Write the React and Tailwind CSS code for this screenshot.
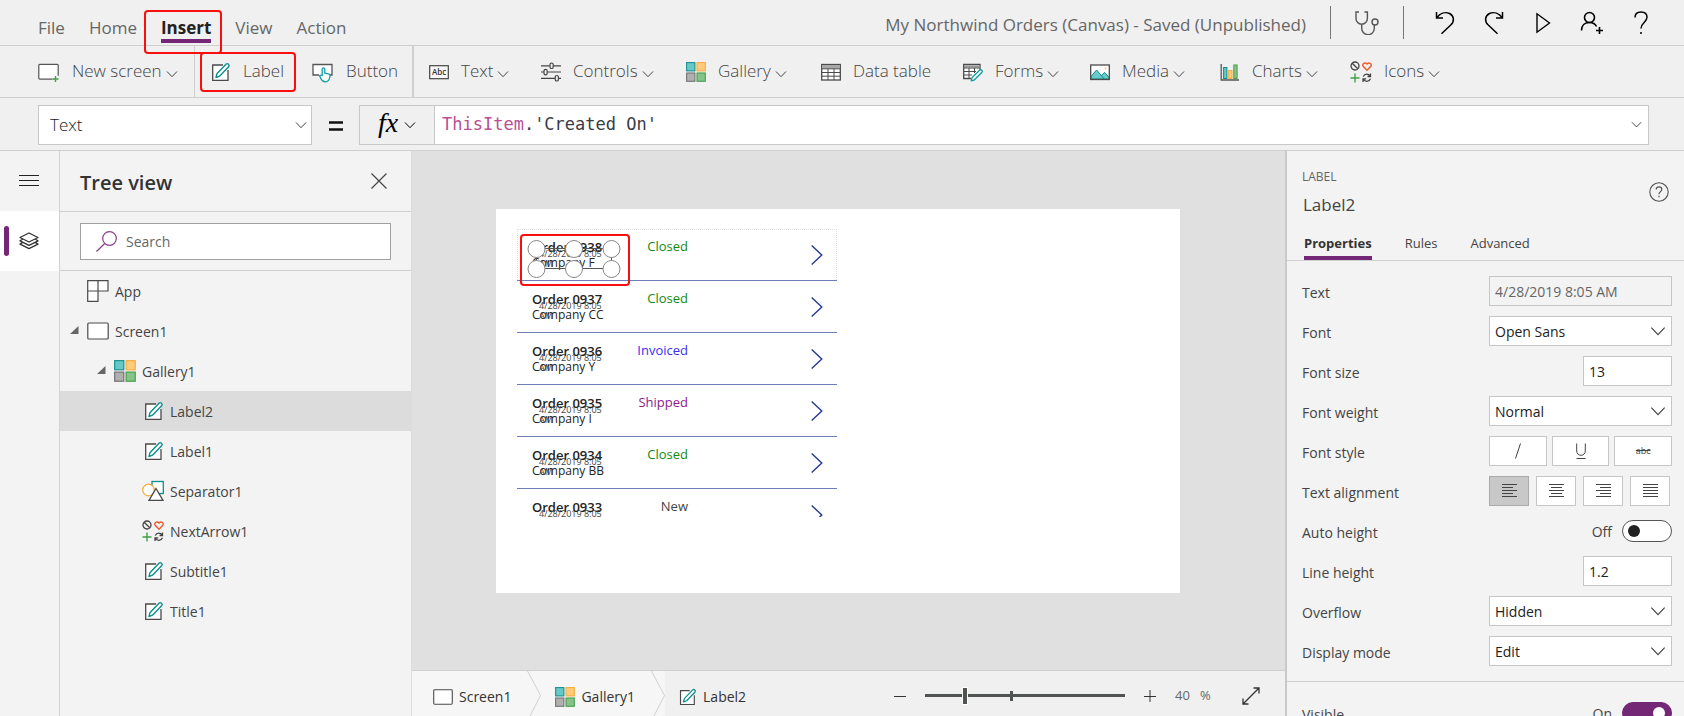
import React from "react";

const stroke = { fill: "none", stroke: "currentColor" };

function Chevron({ className = "w-3 h-3", width = 1 }) {
  return (
    <svg viewBox="0 0 12 12" className={className} {...stroke} strokeWidth={width} aria-hidden="true">
      <path d="M1 3.5 6 8.7 11 3.5" />
    </svg>
  );
}

function ScreenIcon({ className = "w-[22px] h-[22px]" }) {
  return (
    <svg viewBox="0 0 22 22" className={className} aria-hidden="true">
      <rect x="0.8" y="3" width="20.4" height="16" rx="1" fill="#fff" stroke="#4a4a4a" strokeWidth="1.2" />
    </svg>
  );
}

function NewScreenIcon() {
  return (
    <svg viewBox="0 0 22 20" className="h-5 w-[22px]" fill="none" aria-hidden="true">
      <path d="M14.5 17.2H1.8a1 1 0 0 1-1-1V3.3a1 1 0 0 1 1-1h17.4a1 1 0 0 1 1 1v10.5" fill="#fff" stroke="#555" strokeWidth="1.2" />
      <path d="M14.5 17H20.5M17.500 14v6" stroke="#43a047" strokeWidth="1.4" />
    </svg>
  );
}

function LabelIcon({ className = "w-5 h-5" }) {
  return (
    <svg viewBox="0 0 20 20" className={className} fill="none" aria-hidden="true">
      <path d="M12 3H1.7V18.3H17V8" fill="#fff" stroke="#4a4a4a" strokeWidth="1.3" />
      <path d="M5 15.5 5.9 11.8 15 2.3a1.7 1.7 0 0 1 2.6 2.4L8.5 14.2Z" fill="#fff" stroke="#0b8f8c" strokeWidth="1.4" strokeLinejoin="round" />
    </svg>
  );
}

function ButtonIcon() {
  return (
    <svg viewBox="0 0 22 22" className="h-[22px] w-[22px]" fill="none" aria-hidden="true">
      <path d="M7 14H1V3.5h19V14h-2" fill="#fff" stroke="#555" strokeWidth="1.3" />
      <path d="M10.2 14.5V8.2a1.3 1.3 0 0 1 2.6 0v4l3.6.7c1.5.3 1.8 1.2 1.5 2.6-.4 2.6-1.2 5.3-4.5 5.3-2.7 0-3.7-1.3-4.6-3.3l-1.2-2.7c.9-1 2-.7 2.6-.3Z" fill="#fff" stroke="#0b9fa5" strokeWidth="1.3" strokeLinejoin="round" />
    </svg>
  );
}

function TextIcon() {
  return (
    <svg viewBox="0 0 20 20" className="h-5 w-5" aria-hidden="true">
      <rect x="0.7" y="3.7" width="18.6" height="13" fill="#f8f8f8" stroke="#444" strokeWidth="1.2" />
      <text x="10" y="13" textAnchor="middle" fontFamily="Open Sans, sans-serif" fontSize="8" fontWeight="600" fill="#333">Abc</text>
    </svg>
  );
}

function ControlsIcon() {
  return (
    <svg viewBox="0 0 20 20" className="h-5 w-5" fill="none" stroke="#444" strokeWidth="1.2" aria-hidden="true">
      <path d="M0 3.8h8.7M12.5 3.8H20M0 10h3M6.5 10H20M0 16.3h14M17.5 16.3H20" />
      <rect x="9" y="1" width="3.2" height="5.5" rx="1.6" />
      <rect x="3" y="7.3" width="3.2" height="5.5" rx="1.6" />
      <rect x="14.2" y="13.5" width="3.2" height="5.5" rx="1.6" />
    </svg>
  );
}

function GalleryIcon({ className = "w-5 h-5" }) {
  return (
    <svg viewBox="0 0 20 20" className={className} strokeWidth="1.1" aria-hidden="true">
      <rect x="0.6" y="0.6" width="8.3" height="8.3" fill="#68c8c8" stroke="#1b9190" />
      <rect x="11" y="0.6" width="8.3" height="8.3" fill="#fccb7c" stroke="#f4ad3f" />
      <rect x="0.6" y="11" width="8.3" height="8.3" fill="#b0b0b0" stroke="#747474" />
      <rect x="11" y="11" width="8.3" height="8.3" fill="#86c28a" stroke="#45a24a" />
    </svg>
  );
}

function TableIcon() {
  return (
    <svg viewBox="0 0 20 20" className="h-5 w-5" fill="none" stroke="#4a4a4a" aria-hidden="true">
      <rect x="0.7" y="2.5" width="18.6" height="15.5" fill="#fff" strokeWidth="1.3" />
      <rect x="1" y="3" width="18" height="3.5" fill="#a8a8a8" stroke="none" />
      <path d="M0.7 6.8h18.6M0.7 10.5h18.6M0.7 14.2h18.6M7 6.8V18M13 6.8V18" />
    </svg>
  );
}

function FormsIcon() {
  return (
    <svg viewBox="0 0 20 20" className="h-5 w-5" fill="none" aria-hidden="true">
      <path d="M8 16.5H.7V2.5H17V8" fill="#fff" stroke="#4a4a4a" strokeWidth="1.3" />
      <path d="M1 4.5h16" stroke="#999" strokeWidth="2" />
      <path d="M.7 6h16M.7 9.5H13M.7 13H9M6 6v10.5M11.5 6v5" stroke="#4a4a4a" />
      <path d="M8.2 18.8 9 15.8 16.5 8.3a1.5 1.5 0 0 1 2.2 2.2L11.2 18Z" fill="#fff" stroke="#0b9fa5" strokeWidth="1.3" strokeLinejoin="round" />
    </svg>
  );
}

function MediaIcon() {
  return (
    <svg viewBox="0 0 20 20" className="h-5 w-5" aria-hidden="true">
      <rect x="0.7" y="3" width="18.6" height="14.5" fill="#fff" />
      <path d="M1 14.5 6.5 8l4 4.5 1 1 3-3.2 4.5 5V17H1Z" fill="#68cbcb" stroke="#0b8f8c" />
      <path d="m10.5 12.5 3.5 4.5" stroke="#0b8f8c" />
      <circle cx="15.5" cy="6.5" r="1" fill="#fbc36b" />
      <rect x="0.7" y="3" width="18.6" height="14.5" fill="none" stroke="#4a4a4a" strokeWidth="1.3" />
    </svg>
  );
}

function ChartsIcon() {
  return (
    <svg viewBox="0 0 20 20" className="h-5 w-5" aria-hidden="true">
      <rect x="3.6" y="5.5" width="3.3" height="11" fill="#68c8c8" stroke="#0b8f8c" />
      <rect x="8.7" y="8.5" width="3.3" height="8" fill="#fccb7c" stroke="#f4ad3f" />
      <rect x="13.8" y="3" width="3.3" height="13.5" fill="#86c28a" stroke="#45a24a" />
      <path d="M1.2 2v16H19" fill="none" stroke="#555" strokeWidth="1.3" />
    </svg>
  );
}

function IconsIcon({ className = "w-[22px] h-[22px]" }) {
  return (
    <svg viewBox="0 0 22 22" className={className} fill="none" aria-hidden="true">
      <g stroke="#444" strokeWidth="1.3">
        <circle cx="5" cy="5" r="4" />
        <path d="m2.2 2.2 5.6 5.6" />
        <path d="M13.3 15.5c.8-1.7 2-2.3 3.4-2.3 1.5 0 2.7.7 3.4 2M20.5 12.5v3h-3M20.5 17.8c-.7 1.7-2 2.5-3.5 2.5s-2.8-.7-3.5-2M13 21v-3.2h3.2" />
      </g>
      <path d="M17 9.2 13.2 5.3C11.8 3.5 14.5.3 17 3c2.5-2.700 5.2.5 3.8 2.3Z" stroke="#f0592b" strokeWidth="1.4" />
      <path d="M5 12.5v9M.5 17h9" stroke="#43a047" strokeWidth="1.4" />
    </svg>
  );
}

function AppIcon() {
  return (
    <svg viewBox="0 0 22 22" className="h-[22px] w-[22px]" fill="#fff" stroke="#4a4a4a" strokeWidth="1.2" aria-hidden="true">
      <path d="M.7.7H21V11H11v10.3H.7ZM11 .7V11M.7 11H11" />
    </svg>
  );
}

function ShapesIcon() {
  return (
    <svg viewBox="0 0 22 22" className="h-[22px] w-[22px]" fill="#fff" aria-hidden="true">
      <rect x="10" y="1.5" width="11.3" height="12" stroke="#0b8f8c" strokeWidth="1.3" />
      <circle cx="6.5" cy="10" r="5.8" stroke="#f4ad3f" strokeWidth="1.3" />
      <path d="M14 8.5 21 20.3H7Z" stroke="#4a4a4a" strokeWidth="1.3" />
    </svg>
  );
}

const toolItems = [
  { label: "Text", icon: TextIcon, menu: true, size: "w-[112px]" },
  { label: "Controls", icon: ControlsIcon, menu: true, size: "w-[145px]" },
  { label: "Gallery", icon: GalleryIcon, menu: true, size: "w-[135px]" },
  { label: "Data table", icon: TableIcon, size: "w-[142px]" },
  { label: "Forms", icon: FormsIcon, menu: true, size: "w-[127px]" },
  { label: "Media", icon: MediaIcon, menu: true, size: "w-[130px]" },
  { label: "Charts", icon: ChartsIcon, menu: true, size: "w-[130px]" },
  { label: "Icons", icon: IconsIcon, menu: true, size: "w-[112px]" },
];

function ToolButton({ icon: Icon, label, menu, size = "" }) {
  return (
    <button type="button" className={"flex shrink-0 items-center gap-3 whitespace-nowrap " + size}>
      <Icon />
      <span className="flex items-center gap-1 pb-[2px]">
        {label}
        {menu && <Chevron className="mt-[6px] h-3 w-3" />}
      </span>
    </button>
  );
}

function TopBar() {
  const icon = "flex h-full w-[49px] items-center justify-center text-black";
  return (
    <header className="flex h-[46px] shrink-0 items-stretch border-b border-[#cfcfcf] pr-[19px] text-[17px] text-[#666]">
      <nav className="flex items-start gap-6 pl-[38px] pt-[14px] leading-7" aria-label="Main menu">
        <button type="button">File</button>
        <button type="button">Home</button>
        <button type="button" className="relative font-bold text-[#222]">
          Insert
          <span className="absolute inset-x-0 top-[25px] h-1 bg-[#742774]" />
          <span className="pointer-events-none absolute -left-[17px] -top-[4px] h-11 w-[78px] rounded border-2 border-[#fa0f0f]" />
        </button>
        <button type="button">View</button>
        <button type="button">Action</button>
      </nav>
      <h1 className="ml-auto mr-6 self-center pt-[5px] text-[17px]">My Northwind Orders (Canvas) - Saved (Unpublished)</h1>
      <span className="my-[6px] w-px bg-[#777]" />
      <button type="button" aria-label="App checker" className="flex w-[72px] items-center justify-center text-[#555]">
        <svg viewBox="0 0 24 24" className="h-6 w-6" {...stroke} strokeWidth="1.4">
          <path d="M4 1H1v6.5a5.7 5.7 0 0 0 11.4 0V1H9.4M6.7 13.2v4a6.3 6.3 0 0 0 12.6.3V14" />
          <circle cx="20" cy="11" r="3" />
        </svg>
      </button>
      <span className="my-[6px] mr-4 w-px bg-[#777]" />
      <button type="button" aria-label="Undo" className={icon}>
        <svg viewBox="0 0 24 24" className="h-6 w-6" {...stroke} strokeWidth="1.5">
          <path d="M3.5 1v6h6.500M3.8 6.700C7 2.5 12 .5 16.5 2.5c4.8 2.3 5 8 1.5 11.2L8.5 22.8" />
        </svg>
      </button>
      <button type="button" aria-label="Redo" className={icon}>
        <svg viewBox="0 0 24 24" className="h-6 w-6" {...stroke} strokeWidth="1.5">
          <path d="M20.5 1v6H14M20.2 6.7C17 2.5 12 .5 7.5 2.5c-4.8 2.3-5 8-1.5 11.2l9.5 9.1" />
        </svg>
      </button>
      <button type="button" aria-label="Preview the app" className={icon}>
        <svg viewBox="0 0 24 24" className="h-6 w-6" {...stroke} strokeWidth="1.4">
          <path d="M6 2.8v18.4L18.5 12Z" />
        </svg>
      </button>
      <button type="button" aria-label="Share" className={icon}>
        <svg viewBox="0 0 24 24" className="h-6 w-6" {...stroke} strokeWidth="1.6">
          <circle cx="9.5" cy="6.5" r="5" />
          <path d="M1.5 19.5c0-5 3.3-8 8-8 3.3 0 5.8 1.5 7 4M16 19.5h7M19.5 16v7" />
        </svg>
      </button>
      <button type="button" aria-label="Help" className={icon}>
        <svg viewBox="0 0 24 24" className="h-6 w-6" {...stroke} strokeWidth="1.5">
          <path d="M6 6.5C6 3 8.5 1 12 1s6 2 6 5.300c0 5.2-6 5.2-6 11.2" />
          <path d="M12 21v2" />
        </svg>
      </button>
    </header>
  );
}

function InsertBar() {
  return (
    <div role="toolbar" aria-label="Insert" className="flex h-[52px] shrink-0 items-center border-b border-[#cfcfcf] pl-[38px] text-[17px] font-light text-[#444]">
      <div className="w-[156px]">
        <ToolButton icon={NewScreenIcon} label="New screen" menu />
      </div>
      <span className="mr-4 h-full w-px bg-[#cfcfcf]" />
      <div className="relative w-[101px]">
        <ToolButton icon={LabelIcon} label="Label" />
        <span className="pointer-events-none absolute -left-[11px] -top-[6px] h-10 w-24 rounded border-2 border-[#fa0f0f]" />
      </div>
      <div className="w-[100px]">
        <ToolButton icon={ButtonIcon} label="Button" />
      </div>
      <span className="mr-[15px] h-full w-[2px] bg-[#cfcfcf]" />
      {toolItems.map((item) => (
        <ToolButton key={item.label} {...item} />
      ))}
    </div>
  );
}

function FormulaBar() {
  return (
    <div className="flex h-[53px] shrink-0 items-start border-b border-[#cfcfcf] pl-[38px] pr-[35px] pt-[7px]">
      <div className="relative w-[274px]">
        <select aria-label="Property" className="h-10 w-full appearance-none border border-[#c8c8c8] bg-white pl-[11px] text-[17px] font-light text-[#222]">
          <option>Text</option>
        </select>
        <Chevron className="pointer-events-none absolute right-[5px] top-[14px] h-3 w-3" />
      </div>
      <svg viewBox="0 0 14 10" className="ml-[17px] mr-4 mt-4 h-[10px] w-[14px]" aria-hidden="true">
        <path d="M0 1.5h14M0 8.5h14" stroke="#111" strokeWidth="2.600" />
      </svg>
      <button type="button" aria-label="Functions" className="flex h-10 w-[75px] items-center justify-center gap-[6px] border border-r-0 border-[#c8c8c8] text-black">
        <span className="pb-1 font-['Liberation_Serif',serif] text-[28px] italic leading-8">fx</span>
        <Chevron />
      </button>
      <div className="relative flex-1 border border-[#c8c8c8] bg-white font-['DejaVu_Sans_Mono',monospace] text-[17px] text-[#3b3b46]">
        <input aria-label="Formula" defaultValue="ThisItem.'Created On'" className="h-[38px] w-full bg-transparent pl-[7px] text-transparent caret-black outline-none" />
        <pre aria-hidden="true" className="pointer-events-none absolute inset-y-0 left-[7px] font-[inherit] leading-9">
          <span className="text-[#b84f97]">ThisItem</span>.'Created On'
        </pre>
        <Chevron className="pointer-events-none absolute right-[6px] top-[13px] h-[11px] w-[11px]" />
      </div>
    </div>
  );
}

const treeItems = [
  { label: "App", icon: AppIcon, pad: "pl-[27px]" },
  { label: "Screen1", icon: ScreenIcon, pad: "pl-[10px]", open: true },
  { label: "Gallery1", icon: () => <GalleryIcon className="h-[22px] w-[22px]" />, pad: "pl-[37px]", open: true },
  { label: "Label2", icon: LabelIcon, pad: "pl-[84px]", selected: true },
  { label: "Label1", icon: LabelIcon, pad: "pl-[84px]" },
  { label: "Separator1", icon: ShapesIcon, pad: "pl-[82px]" },
  { label: "NextArrow1", icon: IconsIcon, pad: "pl-[82px]" },
  { label: "Subtitle1", icon: LabelIcon, pad: "pl-[84px]" },
  { label: "Title1", icon: LabelIcon, pad: "pl-[84px]" },
];

function LeftPanel() {
  return (
    <>
      <div className="flex w-[60px] shrink-0 flex-col border-r border-[#d2d2d2]">
        <button type="button" aria-label="Menu" className="flex h-[60px] items-center pl-[19px] text-[#222]">
          <svg viewBox="0 0 20 12" className="h-3 w-5" {...stroke}>
            <path d="M0 .5h20M0 5.5h20M0 10.5h20" />
          </svg>
        </button>
        <button type="button" aria-label="Tree view" className="flex h-[60px] items-center bg-white pl-1 text-[#333]">
          <span className="h-[30px] w-[5px] rounded-sm bg-[#742774]" />
          <svg viewBox="0 0 20 20" className="ml-[10px] h-5 w-5" {...stroke} strokeWidth="1.3" strokeLinejoin="round">
            <path d="M10 2 19 6.5 10 11 1 6.5ZM3.5 8.3 1 9.8l9 4.5 9-4.5-2.5-1.5M3.5 11.6 1 13.1l9 4.5 9-4.5-2.5-1.5" />
          </svg>
        </button>
      </div>
      <aside className="flex w-[352px] shrink-0 flex-col border-r border-[#dcdcdc] text-[14px] text-[#444]">
        <div className="flex h-[61px] items-center justify-between border-b border-[#cfcfcf] pl-5 pr-6">
          <h2 className="pt-[3px] text-[20px] font-semibold text-[#333]">Tree view</h2>
          <button type="button" aria-label="Close">
            <svg viewBox="0 0 16 16" className="h-4 w-4" {...stroke} strokeWidth="1.2">
              <path d="M.5.5l15 15M15.5.5l-15 15" />
            </svg>
          </button>
        </div>
        <div className="h-[59px] border-b border-[#cfcfcf] px-5 pt-[11px]">
          <label className="flex h-[37px] items-center gap-[9px] border border-[#a0a0a0] bg-white pl-[15px]">
            <svg viewBox="0 0 21 21" className="h-[21px] w-[21px] shrink-0 text-[#8a3d8a]" {...stroke} strokeWidth="1.2">
              <circle cx="13.5" cy="7.5" r="6.8" />
              <path d="M8.7 12.5.5 20.5" />
            </svg>
            <input type="search" aria-label="Search" placeholder="Search" className="w-full bg-transparent outline-none placeholder:text-[#666]" />
          </label>
        </div>
        <ul>
          {treeItems.map(({ label, icon: Icon, pad, open, selected }) => (
            <li key={label}>
              <button type="button" className={"flex h-10 w-full items-center " + pad + (selected ? " bg-[#dcdcdc]" : "")}>
                {open && (
                  <svg viewBox="0 0 9 8" className="mb-[3px] mr-2 h-2 w-[9px]" aria-hidden="true">
                    <path d="M8.5 0V8H0Z" fill="#666" />
                  </svg>
                )}
                <Icon />
                <span className="pl-[6px]">{label}</span>
              </button>
            </li>
          ))}
        </ul>
      </aside>
    </>
  );
}

const orders = [
  { title: "Order 0938", company: "Company F", status: "Closed", color: "text-[#128a12]" },
  { title: "Order 0937", company: "Company CC", status: "Closed", color: "text-[#128a12]" },
  { title: "Order 0936", company: "Company Y", status: "Invoiced", color: "text-[#3a2ef0]" },
  { title: "Order 0935", company: "Company I", status: "Shipped", color: "text-[#8d1a8d]" },
  { title: "Order 0934", company: "Company BB", status: "Closed", color: "text-[#128a12]" },
  { title: "Order 0933", status: "New", color: "text-[#444]" },
];

function Selection() {
  return (
    <>
      <span className="absolute inset-0 border border-b-0 border-dotted border-[#ddd]" />
      <svg viewBox="0 0 96 40" className="absolute left-[10px] top-[10px] h-10 w-24" fill="#fff" stroke="#888" aria-hidden="true">
        <rect x="9.5" y="9.5" width="75" height="20" fill="none" stroke="#555" />
        {[9.5, 47, 84.5].map((x) =>
          [10, 30].map((y) => <circle key={x + "-" + y} cx={x} cy={y} r="8.5" />)
        )}
      </svg>
      <span className="absolute left-[3px] top-[5px] z-10 h-[52px] w-[110px] rounded border-2 border-[#fa0f0f]" />
    </>
  );
}

function OrderRow({ title, company, status, color, first }) {
  return (
    <li className="relative flex h-[52px] shrink-0 justify-between border-b border-[#6d7db8]">
      <div className="pl-[15px] pt-[11px] text-[12px] leading-[15px] text-[#222]">
        <p className="text-[13px] font-semibold">{title}</p>
        {company && <p>{company}</p>}
      </div>
      <p className="absolute left-[22px] top-5 w-[66px] text-[9px] leading-[10px] text-[#444]">
        4/28/2019 8:05 AM
      </p>
      <div className="flex items-start pr-[14px]">
        <p className={"pr-[123px] pt-2 text-right text-[13px] leading-[18px] " + color}>{status}</p>
        <svg viewBox="0 0 12 20" className="mt-4 h-5 w-3" fill="none" stroke="#253a8e" strokeWidth="1.4" aria-hidden="true">
          <path d="M.7.500 10.8 10 .7 19.5" />
        </svg>
      </div>
      {first && <Selection />}
    </li>
  );
}

function Crumb({ children, last }) {
  return (
    <li className={"flex items-stretch " + (last ? "" : "bg-[#f6f6f6]")}>
      <button type="button" className="flex items-center gap-[6px] pt-[6px]">{children}</button>
      {!last && (
        <svg viewBox="0 0 14 46" preserveAspectRatio="none" className="ml-4 h-full w-[14px]" aria-hidden="true">
          <path d="M.5 0 13.5 25 3 46" fill="none" stroke="#cfcfcf" />
        </svg>
      )}
    </li>
  );
}

function Workspace() {
  return (
    <main className="flex min-w-0 flex-1 flex-col bg-[#e0e0e0]">
      <div className="flex min-h-0 flex-1 items-center justify-center overflow-hidden pb-[19px] pr-[21px]">
        <div className="h-[384px] w-[684px] shrink-0 bg-white pl-[21px] pt-5">
          <ul className="flex h-[288px] w-[320px] flex-col overflow-hidden">
            {orders.map((o, i) => (
              <OrderRow key={o.title} {...o} first={i === 0} />
            ))}
          </ul>
        </div>
      </div>
      <footer className="flex h-[46px] shrink-0 items-stretch border-t border-[#cfcfcf] bg-[#f0f0f0] pr-[25px] text-[14px] text-[#333]">
        <ol className="flex items-stretch">
          <li className="w-[21px] bg-[#f6f6f6]" />
          <Crumb>
            <ScreenIcon className="h-5 w-5" />
            Screen1
          </Crumb>
          <li className="w-[14px] bg-[#f6f6f6]" />
          <Crumb>
            <GalleryIcon />
            Gallery1
          </Crumb>
          <li className="w-[14px]" />
          <Crumb last>
            <LabelIcon className="h-[18px] w-[18px]" />
            Label2
          </Crumb>
        </ol>
        <div className="ml-auto flex items-center pt-1">
          <button type="button" aria-label="Zoom out">
            <svg viewBox="0 0 12 12" className="h-3 w-3" {...stroke}><path d="M0 6.5h12" /></svg>
          </button>
          <div className="relative mx-[19px] flex h-5 w-[200px] items-center">
            <span className="absolute left-[85px] h-[10px] w-[3px] bg-[#505450]" />
            <input
              type="range"
              aria-label="Zoom"
              min="0"
              max="100"
              defaultValue="19"
              className="relative h-[3px] w-full appearance-none bg-[#505450] [&::-webkit-slider-thumb]:h-[18px] [&::-webkit-slider-thumb]:w-[6px] [&::-webkit-slider-thumb]:appearance-none [&::-webkit-slider-thumb]:border [&::-webkit-slider-thumb]:border-white [&::-webkit-slider-thumb]:bg-[#505450]"
            />
          </div>
          <button type="button" aria-label="Zoom in">
            <svg viewBox="0 0 12 12" className="h-3 w-3" {...stroke}><path d="M0 6.5h12M6 0v12" /></svg>
          </button>
          <span className="ml-[19px] w-[25px] text-[13px] text-[#666]">40</span>
          <span className="w-[42px] text-[13px] text-[#666]">%</span>
          <button type="button" aria-label="Fit to window">
            <svg viewBox="0 0 18 18" className="h-[18px] w-[18px]" {...stroke} strokeWidth="1.3">
              <path d="M1 17 17 1M11.5 1H17v5.5M1 11.5V17h5.5" />
            </svg>
          </button>
        </div>
      </footer>
    </main>
  );
}

function Field({ label, id, children }) {
  return (
    <div className="flex h-[30px] items-center justify-between">
      <label htmlFor={id} className="pt-[3px]">{label}</label>
      {children}
    </div>
  );
}

function SelectField({ label, id, value }) {
  return (
    <Field label={label} id={id}>
      <div className="relative w-[183px]">
        <select id={id} className="h-[30px] w-full appearance-none border border-[#c6c6c6] bg-white pl-[5px] text-[#222]">
          <option>{value}</option>
        </select>
        <Chevron className="pointer-events-none absolute right-[6px] top-[7px] h-4 w-4" width={0.9} />
      </div>
    </Field>
  );
}

function Toggle({ id, label, on }) {
  return (
    <span className="flex items-center gap-[10px]">
      {label}
      <span className="relative flex h-[22px] w-[50px]">
        <input
          id={id}
          type="checkbox"
          role="switch"
          defaultChecked={on}
          className="peer h-full w-full appearance-none rounded-full border border-[#555] bg-white checked:border-[#742774] checked:bg-[#742774]"
        />
        <span className="pointer-events-none absolute left-[6px] top-[5px] h-3 w-3 rounded-full bg-[#222] peer-checked:left-[31px] peer-checked:bg-white" />
      </span>
    </span>
  );
}

const alignLines = {
  Left: "M0 .5h15M0 3.5h11M0 6.5h15M0 9.5h11M0 12.5h15",
  Center: "M0 .5h15M2 3.5h11M0 6.5h15M2 9.5h11M0 12.5h15",
  Right: "M0 .5h15M4 3.5h11M0 6.5h15M4 9.5h11M0 12.5h15",
  Justify: "M0 .5h15M0 3.5h15M0 6.5h15M0 9.5h15M0 12.5h15",
};

function PropertiesPanel() {
  const styleButton = "flex h-[30px] flex-1 items-center justify-center border border-[#c6c6c6] bg-white";
  return (
    <aside className="w-[399px] shrink-0 overflow-hidden border-l-2 border-[#c9c9c9] text-[14px] text-[#444]">
      <div className="flex items-center justify-between pl-[15px] pr-[15px] pt-4">
        <div>
          <p className="text-[12px] leading-5 text-[#666]">LABEL</p>
          <h2 className="pl-px pt-[6px] text-[17px] leading-6">Label2</h2>
        </div>
        <button type="button" aria-label="Help about this control">
          <svg viewBox="0 0 20 20" className="h-5 w-5" fill="none" stroke="#555">
            <circle cx="10" cy="10" r="9.2" strokeWidth="1.1" />
            <path d="M7.2 7.5c0-1.7 1.2-2.7 2.8-2.7s2.8 1 2.8 2.5c0 2.3-2.8 2.5-2.8 5M10 13.7v1.5" strokeWidth="1.2" />
          </svg>
        </button>
      </div>
      <div role="tablist" className="flex h-11 items-end gap-[33px] border-b border-[#cfcfcf] pl-[17px] text-[13px] leading-[26px]">
        <button type="button" role="tab" aria-selected="true" className="h-[31px] border-b-4 border-[#742774] font-bold text-[#333]">Properties</button>
        <button type="button" role="tab" aria-selected="false" className="h-[31px] pb-1">Rules</button>
        <button type="button" role="tab" aria-selected="false" className="h-[31px] pb-1">Advanced</button>
      </div>
      <div className="flex flex-col gap-[10px] border-b border-[#cfcfcf] pb-[15px] pl-[15px] pr-3 pt-[15px]">
        <Field label="Text" id="prop-text">
          <input id="prop-text" readOnly value="4/28/2019 8:05 AM" className="h-[30px] w-[183px] border border-[#c6c6c6] bg-[#f3f3f3] pl-[5px] text-[#666]" />
        </Field>
        <SelectField label="Font" id="prop-font" value="Open Sans" />
        <Field label="Font size" id="prop-size">
          <input id="prop-size" defaultValue="13" className="h-[30px] w-[89px] border border-[#c6c6c6] bg-white pl-[5px] text-[#222]" />
        </Field>
        <SelectField label="Font weight" id="prop-weight" value="Normal" />
        <div className="flex h-[30px] items-center justify-between">
          <span className="pt-[3px]">Font style</span>
          <div className="flex w-[183px] gap-[5px]" role="group" aria-label="Font style">
            <button type="button" aria-label="Italic" className={styleButton}>
              <svg viewBox="0 0 6 16" className="h-4 w-[6px]" {...stroke}><path d="M5.5.5.5 15.5" /></svg>
            </button>
            <button type="button" aria-label="Underline" className={styleButton}>
              <svg viewBox="0 0 10 16" className="h-4 w-[10px]" {...stroke}><path d="M.7.5v7.5a4.3 4.3 0 0 0 8.6 0V.5M.5 15.5h9" /></svg>
            </button>
            <button type="button" aria-label="Strikethrough" className={styleButton}>
              <span className="text-[9px] line-through">abc</span>
            </button>
          </div>
        </div>
        <div className="flex h-[30px] items-center justify-between">
          <span className="pt-[3px]">Text alignment</span>
          <div className="flex w-[183px] gap-[7px]" role="group" aria-label="Text alignment">
            {Object.entries(alignLines).map(([name, d], i) => (
              <button
                key={name}
                type="button"
                aria-label={name}
                aria-pressed={i === 0}
                className={"flex h-[30px] w-10 items-center justify-center border " + (i === 0 ? "border-[#aaa] bg-[#c8c8c8]" : "border-[#c6c6c6] bg-white")}
              >
                <svg viewBox="0 0 15 14" className="h-[14px] w-[15px]" {...stroke}><path d={d} /></svg>
              </button>
            ))}
          </div>
        </div>
        <Field label="Auto height" id="prop-auto"><Toggle id="prop-auto" label="Off" /></Field>
        <Field label="Line height" id="prop-line">
          <input id="prop-line" defaultValue="1.2" className="h-[30px] w-[89px] border border-[#c6c6c6] bg-white pl-[5px] text-[#222]" />
        </Field>
        <SelectField label="Overflow" id="prop-overflow" value="Hidden" />
        <SelectField label="Display mode" id="prop-display" value="Edit" />
      </div>
      <div className="pl-[15px] pr-3 pt-4">
        <Field label="Visible" id="prop-visible"><Toggle id="prop-visible" label="On" on /></Field>
      </div>
    </aside>
  );
}

export default function App() {
  return (
    <div className="flex h-screen flex-col overflow-hidden bg-[#f0f0f0] font-['Open_Sans',sans-serif] text-[#444]">
      <TopBar />
      <InsertBar />
      <FormulaBar />
      <div className="flex min-h-0 flex-1 bg-[#f3f3f3]">
        <LeftPanel />
        <Workspace />
        <PropertiesPanel />
      </div>
    </div>
  );
}
